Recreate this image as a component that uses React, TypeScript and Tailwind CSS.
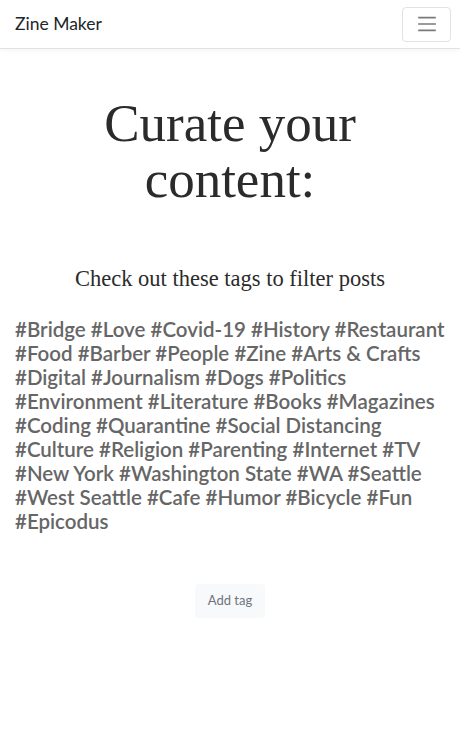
const tags = [
  "Bridge", "Love", "Covid-19", "History", "Restaurant", "Food", "Barber", "People", "Zine",
  "Arts & Crafts", "Digital", "Journalism", "Dogs", "Politics", "Environment", "Literature",
  "Books", "Magazines", "Coding", "Quarantine", "Social Distancing", "Culture", "Religion",
  "Parenting", "Internet", "TV", "New York", "Washington State", "WA", "Seattle",
  "West Seattle", "Cafe", "Humor", "Bicycle", "Fun", "Epicodus",
];

const App = () => {
  return (
    <div className="min-h-[743px] bg-white font-['Lato',sans-serif]">
      <nav className="flex h-[49px] items-center justify-between border-b border-[#dee2e6] pl-[15px] pr-[9px] shadow-[0_2px_4px_rgba(0,0,0,0.04)]">
        <span className="text-[17.5px] text-[#212529]">Zine Maker</span>
        <button className="flex h-[35px] w-[49px] items-center justify-center rounded border border-[#e2e2e2]">
          <svg width="24" height="24" viewBox="0 0 30 30">
            <path d="M4 7h22M4 15h22M4 23h22" stroke="#7a7a7a" strokeWidth="2" />
          </svg>
        </button>
      </nav>

      <main className="px-[15px]">
        <h1 className="mt-[46px] text-center font-['Liberation_Serif',serif] text-[53px] leading-[56px] text-[#2b2b2b]">
          Curate your
          <br />
          content:
        </h1>
        <p className="mt-[55px] text-center font-['Liberation_Serif',serif] text-[22.5px] text-[#2b2b2b]">
          Check out these tags to filter posts
        </p>

        <div className="mt-[21px] text-[20.5px] font-semibold leading-[24px] text-[#666]">
          {tags.map((t, i) => (
            <span key={i}>
              #{t}{i < tags.length - 1 ? " " : ""}
            </span>
          ))}
        </div>

        <div className="mt-[51px] flex justify-center">
          <button className="h-[34px] rounded bg-[#f8f9fa] px-[13px] text-[13px] text-[#6c757d]">
            Add tag
          </button>
        </div>
      </main>
    </div>
  );
};

export default App;
